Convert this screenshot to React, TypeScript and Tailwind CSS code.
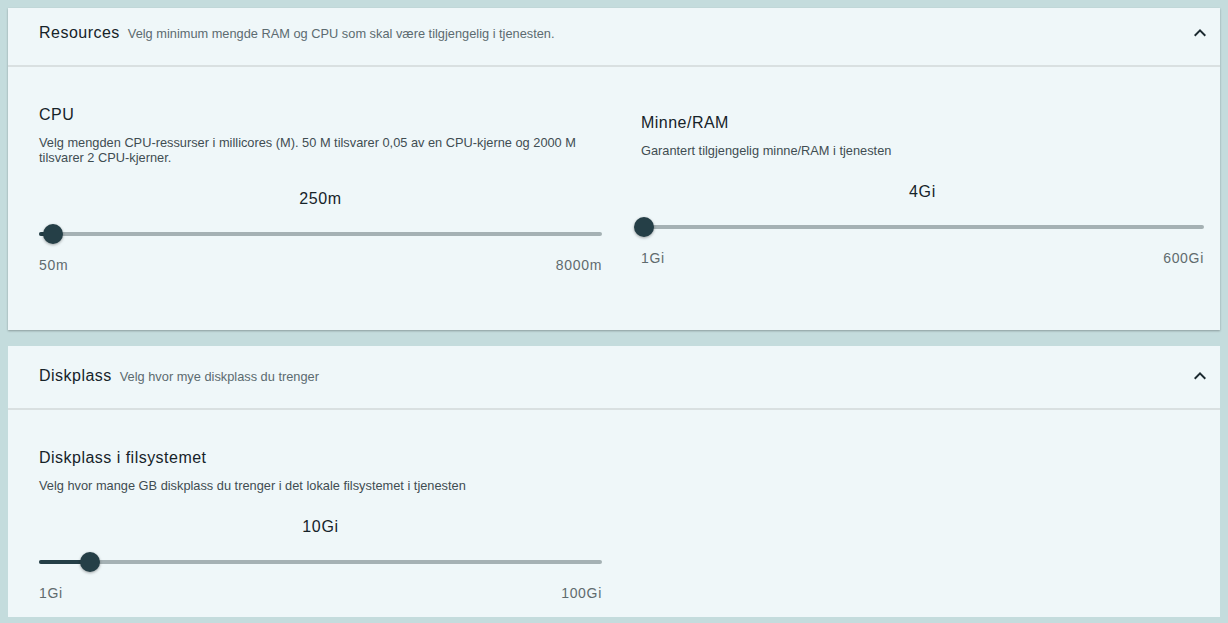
import React from 'react';

type SliderProps = {
  value: string;
  min: string;
  max: string;
  pct: number;
};

function RangeSlider({ value, min, max, pct }: SliderProps) {
  return (
    <div>
      <p className="text-center text-base leading-6 tracking-[0.04em] text-[#162329]">{value}</p>
      <div className="relative mt-[13px] h-5">
        <div className="absolute left-0 right-0 top-1/2 h-1 -translate-y-1/2 rounded-full bg-[#a5b1b4]" />
        <div
          className="absolute left-0 top-1/2 h-1 -translate-y-1/2 rounded-full bg-[#253f47]"
          style={{ width: `${pct}%` }}
        />
        <div
          className="absolute top-1/2 h-5 w-5 -translate-x-1/2 -translate-y-1/2 rounded-full bg-[#253f47] shadow-[0_1px_3px_rgba(0,0,0,0.35)]"
          style={{ left: `${pct}%` }}
        />
      </div>
      <div className="mt-[11px] flex justify-between text-sm leading-5 tracking-[0.05em] text-[#5f6b6e]">
        <span>{min}</span>
        <span>{max}</span>
      </div>
    </div>
  );
}

type FieldProps = SliderProps & {
  title: string;
  description: string;
};

function ResourceField({ title, description, ...slider }: FieldProps) {
  return (
    <div>
      <h3 className="text-base leading-6 tracking-[0.03em] text-[#162329]">{title}</h3>
      <p className="mt-2 text-[12.8px] leading-[15px] text-[#3f4d52]">{description}</p>
      <div className="mt-[22px]">
        <RangeSlider {...slider} />
      </div>
    </div>
  );
}

function SectionHeader({ title, subtitle, className }: { title: string; subtitle: string; className: string }) {
  return (
    <div className={`flex items-center justify-between border-b-2 border-[#d9e0e1] pl-[31px] pr-2 pb-5 ${className}`}>
      <div className="flex items-baseline gap-2">
        <h2 className="text-base leading-6 tracking-[0.03em] text-[#162329]">{title}</h2>
        <span className="text-[12.8px] text-[#5c6b70]">{subtitle}</span>
      </div>
      <svg viewBox="0 0 24 24" className="h-6 w-6 fill-[#1c2a30]">
        <path d="M12 8l-6 6 1.41 1.41L12 10.83l4.59 4.58L18 14z" />
      </svg>
    </div>
  );
}

export default function App() {
  return (
    <div className="flex min-h-screen flex-col gap-4 bg-[#c4dcdd] px-2 pt-2 pb-[6px] font-['Liberation_Sans',Arial,sans-serif]">
      {/* Resources */}
      <section className="bg-[#eff7f9] shadow-[0_1px_2px_rgba(0,0,0,0.3)]">
        <SectionHeader
          title="Resources"
          subtitle="Velg minimum mengde RAM og CPU som skal være tilgjengelig i tjenesten."
          className="pt-[13px]"
        />
        <div className="grid grid-cols-2 items-center gap-x-[39px] pl-[31px] pr-4 pt-9 pb-[55px]">
          <ResourceField
            title="CPU"
            description="Velg mengden CPU-ressurser i millicores (M). 50 M tilsvarer 0,05 av en CPU-kjerne og 2000 M tilsvarer 2 CPU-kjerner."
            value="250m"
            min="50m"
            max="8000m"
            pct={2.5}
          />
          <ResourceField
            title="Minne/RAM"
            description="Garantert tilgjengelig minne/RAM i tjenesten"
            value="4Gi"
            min="1Gi"
            max="600Gi"
            pct={0.5}
          />
        </div>
      </section>

      {/* Diskplass */}
      <section className="bg-[#eff7f9]">
        <SectionHeader title="Diskplass" subtitle="Velg hvor mye diskplass du trenger" className="pt-[18px]" />
        <div className="grid grid-cols-2 gap-x-[39px] pl-[31px] pr-4 pt-9 pb-[14px]">
          <ResourceField
            title="Diskplass i filsystemet"
            description="Velg hvor mange GB diskplass du trenger i det lokale filsystemet i tjenesten"
            value="10Gi"
            min="1Gi"
            max="100Gi"
            pct={9.1}
          />
        </div>
      </section>
    </div>
  );
}
